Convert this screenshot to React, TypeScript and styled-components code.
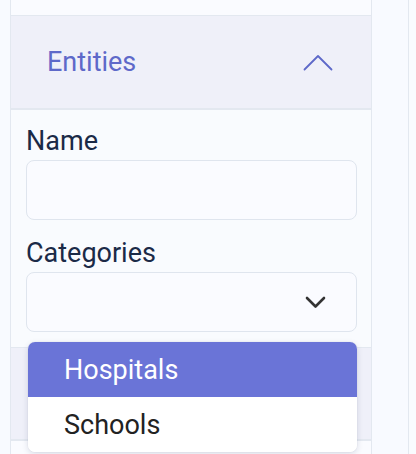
import React from "react";
import styled, { createGlobalStyle } from "styled-components";

const GlobalStyle = createGlobalStyle`
  html, body {
    margin: 0;
    padding: 0;
    background: #f8faff;
    font-family: Roboto, "Liberation Sans", sans-serif;
  }
  * {
    box-sizing: border-box;
  }
`;

const categories = ["Hospitals", "Schools"];

export default function App() {
  return (
    <>
      <GlobalStyle />
      <Page>
        <Sidebar>
          <SectionBody $height={15} />
          <AccordionHeader>
            <HeaderTitle>Entities</HeaderTitle>
            <svg width="30" height="17" viewBox="0 0 30 17" fill="none">
              <polyline
                points="1.5,15.5 15,2 28.5,15.5"
                stroke="#5e69c9"
                strokeWidth="1.8"
                strokeLinecap="round"
                strokeLinejoin="round"
              />
            </svg>
          </AccordionHeader>
          <FormBody>
            <Label>Name</Label>
            <TextInput type="text" />
            <Label $spaced>Categories</Label>
            <SelectWrap>
              <SelectBox>
                <svg width="21" height="13" viewBox="0 0 21 13" fill="none">
                  <polyline
                    points="2,2 10.5,10.5 19,2"
                    stroke="#333"
                    strokeWidth="2.6"
                    strokeLinecap="round"
                    strokeLinejoin="round"
                  />
                </svg>
              </SelectBox>
              <Menu>
                {categories.map((c, i) => (
                  <MenuItem key={c} $active={i === 0}>
                    {c}
                  </MenuItem>
                ))}
              </Menu>
            </SelectWrap>
          </FormBody>
          <AccordionHeader $height={91} />
          <SectionBody $height={20} />
        </Sidebar>
        <Gutter />
        <RightPane />
      </Page>
    </>
  );
}

const Page = styled.div`
  display: flex;
  height: 454px;
  overflow: hidden;
  padding-left: 10px;
`;

const Sidebar = styled.div`
  width: 362px;
  flex-shrink: 0;
  display: flex;
  flex-direction: column;
  border-left: 1px solid #e3e8f0;
  border-right: 1px solid #e3e8f0;
  background: #f9fbfe;
`;

const SectionBody = styled.div<{ $height: number }>`
  height: ${(p) => p.$height + 1}px;
  flex-shrink: 0;
  background: #fafbff;
  border-bottom: 1px solid #e3e8f0;
`;

const AccordionHeader = styled.div<{ $height?: number }>`
  height: ${(p) => (p.$height ?? 92) + 2}px;
  flex-shrink: 0;
  display: flex;
  align-items: center;
  justify-content: space-between;
  padding: 0 38px 0 36px;
  background: #eff0f9;
  border-bottom: 2px solid #e3e8f0;
`;

const HeaderTitle = styled.span`
  font-size: 27px;
  color: #5e69c9;
  line-height: 30px;
`;

const FormBody = styled.div`
  display: flex;
  flex-direction: column;
  padding: 16px 14px 15px 15px;
  border-bottom: 1px solid #e3e8f0;
`;

const Label = styled.label<{ $spaced?: boolean }>`
  font-size: 27px;
  line-height: 30px;
  color: #1b2a47;
  margin-top: ${(p) => (p.$spaced ? "18px" : "0")};
  margin-bottom: 4px;
`;

const TextInput = styled.input`
  height: 60px;
  width: 100%;
  border: 1px solid #dfe5ee;
  border-radius: 8px;
  background: #fafbff;
  outline: none;
`;

const SelectWrap = styled.div`
  position: relative;
`;

const SelectBox = styled.div`
  height: 60px;
  display: flex;
  align-items: center;
  justify-content: flex-end;
  padding-right: 30px;
  border: 1px solid #dfe5ee;
  border-radius: 8px;
  background: #fafbff;
`;

const Menu = styled.ul`
  position: absolute;
  top: 70px;
  left: 2px;
  right: 0;
  margin: 0;
  padding: 0;
  list-style: none;
  background: #fff;
  border-radius: 7px;
  overflow: hidden;
  box-shadow: 0 2px 6px rgba(30, 40, 80, 0.14), 0 0 1px rgba(30, 40, 80, 0.2);
  z-index: 2;
`;

const MenuItem = styled.li<{ $active?: boolean }>`
  height: 55px;
  display: flex;
  align-items: center;
  padding-left: 36px;
  font-size: 27px;
  color: ${(p) => (p.$active ? "#ffffff" : "#222222")};
  background: ${(p) => (p.$active ? "#6a74d7" : "#ffffff")};
`;

const Gutter = styled.div`
  width: 36px;
  flex-shrink: 0;
`;

const RightPane = styled.div`
  flex: 1;
  border-left: 1px solid #e3e8f0;
  background: #f9fbfe;
`;
